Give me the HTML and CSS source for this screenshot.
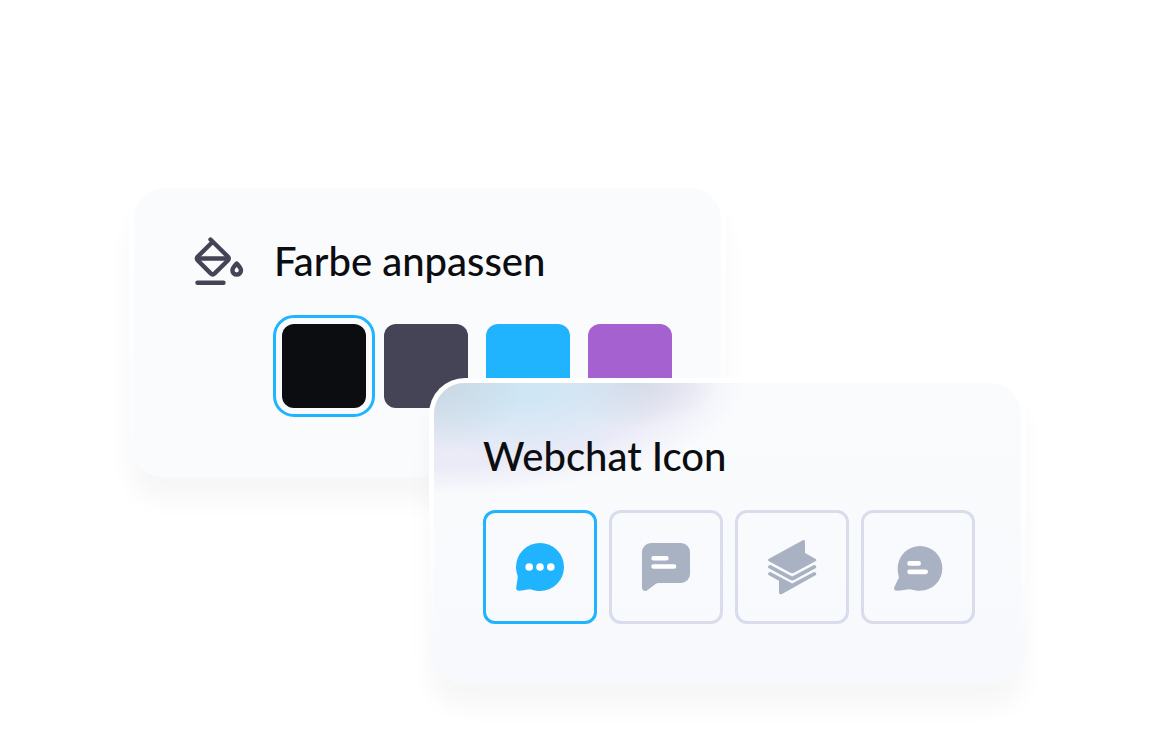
FILE: index.html
```html
<!DOCTYPE html>
<html lang="de">
<head>
<meta charset="utf-8">
<meta name="viewport" content="width=device-width, initial-scale=1">
<title>Webchat anpassen</title>
<link rel="stylesheet" href="styles.css">
</head>
<body>
<main class="stage">
  <section class="card card-color" aria-labelledby="color-title">
    <svg class="card-icon" viewBox="0 0 50 50" fill="none" stroke="currentColor" stroke-width="4.400" stroke-linecap="round" stroke-linejoin="round" aria-hidden="true">
      <path d="M16.500 2.500L33.800 19.500Q35.600 21.500 33.800 23.500L20.700 36.400Q18.700 38.300 16.700 36.400L3.800 23.500Q2 21.500 3.800 19.500L18.500 5"/>
      <path d="M4 21.500H34"/>
      <path d="M42.700 26.500C40.500 29 38.400 31.200 38.400 33.300A4.300 4.300 0 0 0 47 33.300C47 31.200 44.900 29 42.700 26.500Z"/>
      <path d="M3.500 45.700H29.500"/>
    </svg>
    <h2 class="card-title" id="color-title">Farbe anpassen</h2>
    <div class="swatches" role="radiogroup" aria-labelledby="color-title">
      <input class="swatch swatch-black" type="radio" name="color" aria-label="Schwarz" checked>
      <input class="swatch swatch-slate" type="radio" name="color" aria-label="Grau">
      <input class="swatch swatch-blue" type="radio" name="color" aria-label="Blau">
      <input class="swatch swatch-purple" type="radio" name="color" aria-label="Violett">
    </div>
  </section>

  <section class="card card-icons" aria-labelledby="icon-title">
    <h2 class="card-title" id="icon-title">Webchat Icon</h2>
    <div class="tiles" role="radiogroup" aria-labelledby="icon-title">
      <label class="tile">
        <input class="tile-input" type="radio" name="icon" aria-label="Sprechblase mit Punkten" checked>
        <svg class="tile-icon" viewBox="0 0 56 56" aria-hidden="true">
          <path fill="currentColor" d="M28 4A24 24 0 1 1 28 52C24.500 52 21.500 51.200 18.500 50.200C15 50.200 11 51.400 7 51.800Q4 51.800 4.200 49C4.500 45 5.600 41 5.800 37.200C4.600 34 4 31 4 28A24 24 0 0 1 28 4Z"/>
          <g fill="#fff"><circle cx="17.200" cy="28" r="3.800"/><circle cx="28" cy="28" r="3.800"/><circle cx="38.800" cy="28" r="3.800"/></g>
        </svg>
      </label>
      <label class="tile">
        <input class="tile-input" type="radio" name="icon" aria-label="Eckige Sprechblase">
        <svg class="tile-icon" viewBox="0 0 56 56" aria-hidden="true">
          <path fill="currentColor" d="M13 4H43A9 9 0 0 1 52 13V35A9 9 0 0 1 43 44H20.500Q19 44 17.500 45L10 50.800C7.500 53 4 52 4 48.500V13A9 9 0 0 1 13 4Z"/>
          <path stroke="#fff" stroke-width="4.600" stroke-linecap="round" d="M15.600 19.200H28.400M15.600 27.500H36"/>
        </svg>
      </label>
      <label class="tile">
        <input class="tile-input" type="radio" name="icon" aria-label="Stapel">
        <svg class="tile-icon" viewBox="0 0 56 56" fill="currentColor" aria-hidden="true">
          <path d="M38.800 1.200Q41 .5 41 2.800V14L51.800 20Q53 21 51.800 22L30 33.800Q28.200 34.600 26.400 33.800L4.500 22Q3.400 21 4.500 20Z"/>
          <path d="M6.400 26L28.200 37.600L50 26Q52.300 26 52.300 28Q52.300 28.800 51.500 29.300L30 41Q28.200 41.900 26.400 41L4.900 29.300Q4 28.800 4 28Q4 26 6.400 26Z"/>
          <path d="M6.400 33L28.200 44.600L50 33Q52.300 33 52.300 35Q52.300 35.800 51.500 36.300L18 55Q15 56 15 53.500V41.800L4.900 36.300Q4 35.800 4 35Q4 33 6.400 33Z"/>
        </svg>
      </label>
      <label class="tile">
        <input class="tile-input" type="radio" name="icon" aria-label="Runde Sprechblase mit Text">
        <svg class="tile-icon" viewBox="0 0 56 56" aria-hidden="true">
          <path fill="currentColor" d="M30 7A22.300 22.300 0 1 1 30 51.700C26.500 51.700 23 51 20 50.200C16 50.200 12 51.700 6.500 51.700C4 51.700 3.600 49.400 4.600 47.600L9 38.500C8.200 35.500 7.700 32.500 7.700 29.300A22.300 22.300 0 0 1 30 7Z"/>
          <path stroke="#fff" stroke-width="4.800" stroke-linecap="round" d="M19.600 24.400H28.600M19.600 32.800H35.600"/>
        </svg>
      </label>
    </div>
  </section>
</main>
</body>
</html>
```
FILE: styles.css
```css
* {
  box-sizing: border-box;
}

body {
  margin: 0;
  background: #fff;
  color: #0b0d10;
  font-family: Lato, "Open Sans", sans-serif;
}

.stage {
  display: grid;
  grid-template-columns: 300fr 297fr 300fr;
  align-items: start;
  padding: 183px 126px 61px 129px;
}

.card {
  grid-row: 1;
  border: 5px solid transparent;
  border-radius: 36px;
  box-shadow: 0 24px 24px 0 rgba(0, 0, 0, 0.035);
}

.card-color {
  grid-column: 1 / 3;
  display: grid;
  grid-template-columns: 50px 1fr;
  column-gap: 30px;
  padding: 49px 48px 64px 60px;
  background:
    linear-gradient(#fafbfd, #fafbfd) padding-box,
    linear-gradient(#fff 30%, #fafbfd) border-box;
}

.card-icons {
  grid-column: 2 / 4;
  margin-top: 195px;
  padding: 49px 46px 55px 49px;
  background:
    radial-gradient(ellipse 90px 70px at 0 0, #c6d7e2, rgba(198, 215, 226, 0)) padding-box,
    radial-gradient(ellipse 140px 80px at 88px 0, #cfe6f5 20%, rgba(207, 230, 245, 0)) padding-box,
    radial-gradient(ellipse 90px 45px at 195px 0, #d5d8e5, rgba(213, 216, 229, 0)) padding-box,
    radial-gradient(ellipse 310px 112px at 0 0, #ebebf7 75%, rgba(235, 235, 247, 0)) padding-box,
    linear-gradient(#fafbfd, #f7f9fc) padding-box,
    linear-gradient(#fff 40%, #f7f9fc 90%) border-box;
}

.card-icon {
  width: 50px;
  height: 50px;
  color: #454457;
}

.card-title {
  margin: 0;
  font-size: 40px;
  font-weight: 500;
  line-height: 48px;
}

.swatches {
  grid-column: 2;
  display: flex;
  gap: 18px;
  padding: 37px 0 0 8px;
}

.swatch {
  appearance: none;
  flex: 0 1 84px;
  min-width: 0;
  height: 84px;
  margin: 0;
  border-radius: 12px;
  cursor: pointer;
}

.swatch:checked {
  outline: 3px solid #20b4ff;
  outline-offset: 6px;
}

.swatch-black {
  background: #0b0d10;
}

.swatch-slate {
  background: #454457;
}

.swatch-blue {
  background: #20b4ff;
}

.swatch-purple {
  background: #a461cf;
}

.tiles {
  display: flex;
  gap: 12px;
  padding-top: 30px;
}

.tile {
  position: relative;
  flex: 0 1 114px;
  display: grid;
  place-items: center;
  height: 114px;
  border: 3px solid #d9ddeb;
  border-radius: 12px;
  color: #a8b2c2;
  cursor: pointer;
}

.tile:has(.tile-input:checked) {
  border-color: #20b4ff;
  color: #20b4ff;
}

.tile-input {
  appearance: none;
  position: absolute;
  inset: 0;
  margin: 0;
  border-radius: 9px;
  cursor: pointer;
}

.tile-icon {
  width: 56px;
  height: 56px;
}
```
